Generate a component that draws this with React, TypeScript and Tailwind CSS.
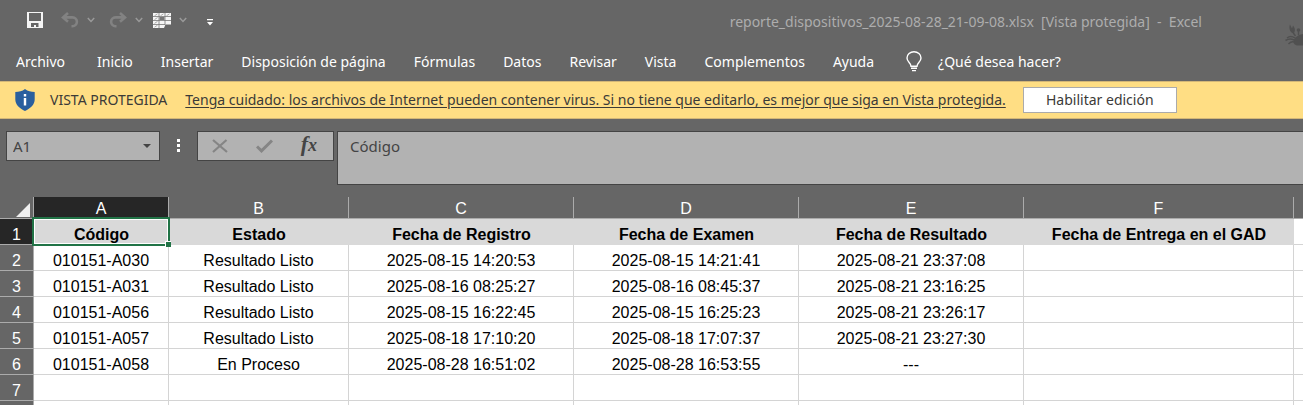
import type { ReactNode } from "react";

const tabs = [
  "Inicio",
  "Insertar",
  "Disposición de página",
  "Fórmulas",
  "Datos",
  "Revisar",
  "Vista",
  "Complementos",
  "Ayuda",
];

const columns = ["A", "B", "C", "D", "E", "F"];

const headings = [
  "Código",
  "Estado",
  "Fecha de Registro",
  "Fecha de Examen",
  "Fecha de Resultado",
  "Fecha de Entrega en el GAD",
];

const rows = [
  ["010151-A030", "Resultado Listo", "2025-08-15 14:20:53", "2025-08-15 14:21:41", "2025-08-21 23:37:08", ""],
  ["010151-A031", "Resultado Listo", "2025-08-16 08:25:27", "2025-08-16 08:45:37", "2025-08-21 23:16:25", ""],
  ["010151-A056", "Resultado Listo", "2025-08-15 16:22:45", "2025-08-15 16:25:23", "2025-08-21 23:26:17", ""],
  ["010151-A057", "Resultado Listo", "2025-08-18 17:10:20", "2025-08-18 17:07:37", "2025-08-21 23:27:30", ""],
  ["010151-A058", "En Proceso", "2025-08-28 16:51:02", "2025-08-28 16:53:55", "---", ""],
  ["", "", "", "", "", ""],
];

function IconButton({ label, className, children }: { label: string; className?: string; children: ReactNode }) {
  return (
    <button type="button" aria-label={label} className={`flex items-center justify-center ${className ?? ""}`}>
      {children}
    </button>
  );
}

function Chevron() {
  return (
    <svg width="8" height="6" viewBox="0 0 8 6" fill="none" stroke="#9a9a9a" strokeWidth="1.5">
      <path d="M.8 1 4 4.4 7.2 1" />
    </svg>
  );
}

function SaveIcon() {
  return (
    <svg width="16" height="16" viewBox="0 0 16 16">
      <path
        fill="#f5f5f5"
        fillRule="evenodd"
        d="M0 0h16v16H0zM2 1v8h12V1zM4 11v4h3v-2h2v2h2.500v-4z"
      />
    </svg>
  );
}

function UndoIcon({ flipped = false }: { flipped?: boolean }) {
  return (
    <svg
      width="18"
      height="16"
      viewBox="0 0 18 16"
      fill="none"
      stroke="#828282"
      strokeWidth="2.6"
      className={flipped ? "-scale-x-100" : ""}
    >
      <path d="M7 1 2 5.400l5 4.400M2 5.400h9.500a4.400 4.400 0 0 1 0 8.800H10.500" />
    </svg>
  );
}

function TableIcon() {
  return (
    <svg width="18" height="15" viewBox="0 0 18 15">
      <path fill="#f5f5f5" d="M0 0h18v11.500h-5.500L11 15H0z" />
      <path stroke="#777" strokeWidth=".8" d="M0 3.500h18M0 7.500h18M0 11.500h12M6 0v15M12 0v12" fill="none" />
      <path stroke="#a0a0a0" strokeWidth=".9" d="m1.500 2.800 3-2M7.500 2.800l3-2M13.500 2.800l3-2M1.500 6.600l3-2M1.500 10.400l3-2M1.500 14.200l3-2" />
      <path fill="#777" d="M6.500 4h5v3h-5z" />
    </svg>
  );
}

function ShieldIcon() {
  return (
    <svg width="20" height="22" viewBox="0 0 20 22">
      <path fill="#2a5f9e" d="M10 0c2.800 2.200 6 3 9.700 3v7.500c0 5-4.200 9-9.700 11.500C4.500 19.500.300 15.500.300 10.500V3C4 3 7.200 2.200 10 0z" />
      <path fill="#fff" d="M8.800 5h2.400v2.400H8.800zM8.800 9h2.400v7.500H8.800z" />
    </svg>
  );
}

function BulbIcon() {
  return (
    <svg width="16" height="21" viewBox="0 0 16 21" fill="none" stroke="#fff" strokeWidth="1.4">
      <path d="M5 15.200C5 11.800 1 11 1 7a7 6.300 0 0 1 14 0c0 4-4 4.800-4 8.200zM5 17.300h6M6 19.600h4" />
    </svg>
  );
}

function CrabIcon() {
  return (
    <svg width="18" height="22" viewBox="0 0 18 22">
      <g fill="#505050">
        <path d="M5 .500 7 4.500 8 1.500c2 2 2.500 5 1.300 7L8.500 9.500C5 8.500 3.500 4 5 .500z" />
        <circle cx="13.500" cy="6" r="1.800" />
        <path d="M8.500 18c0-4 3.500-7 9.500-8v11.500h-6c-2-.500-3.500-1.500-3.500-3.500z" />
      </g>
      <path
        fill="none"
        stroke="#505050"
        strokeWidth="1.500"
        d="M8.300 9 10.500 12M13.500 7v4M10 14c-3-2-5.500-2-8 0M9 16c-3-1.500-6-1-8.500.500M9 18c-2-.500-4 .500-5.500 2"
      />
    </svg>
  );
}

function TitleBar() {
  return (
    <header className="relative flex h-10 items-center pl-[27px] pr-[101px]">
      <div className="flex items-center">
        <IconButton label="Guardar" className="w-4"><SaveIcon /></IconButton>
        <IconButton label="Deshacer" className="ml-[18px]"><UndoIcon /></IconButton>
        <IconButton label="Opciones de deshacer" className="ml-2"><Chevron /></IconButton>
        <IconButton label="Rehacer" className="ml-3.5"><UndoIcon flipped /></IconButton>
        <IconButton label="Opciones de rehacer" className="ml-2"><Chevron /></IconButton>
        <IconButton label="Tabla" className="ml-2.5"><TableIcon /></IconButton>
        <IconButton label="Opciones de tabla" className="ml-2"><Chevron /></IconButton>
        <IconButton label="Personalizar barra" className="ml-5 pt-1">
          <svg width="6" height="7" viewBox="0 0 6 7" fill="#fff"><path d="M0 0h6v1.200H0zM0 3h6L3 6.500z" /></svg>
        </IconButton>
      </div>
      <h1 className="ml-auto whitespace-pre pt-1 text-sm text-[#adadad]">
        reporte_dispositivos_2025-08-28_21-09-08.xlsx  [Vista protegida]  -  Excel
      </h1>
      <div className="absolute right-0 top-6"><CrabIcon /></div>
    </header>
  );
}

function Ribbon() {
  return (
    <nav className="flex h-[41px] items-center gap-8 whitespace-nowrap px-4 pt-0.5 text-sm text-white">
      <button type="button">Archivo</button>
      <div className="flex items-center gap-7">
        {tabs.map((tab) => (
          <button type="button" key={tab}>{tab}</button>
        ))}
      </div>
      <button type="button" className="flex items-center gap-4">
        <BulbIcon />
        ¿Qué desea hacer?
      </button>
    </nav>
  );
}

function ProtectedBar() {
  return (
    <div className="flex h-[38px] items-center whitespace-nowrap border-y border-[#d3b778] bg-[#ffde84] pl-[15px] text-sm text-[#3b3a38]">
      <ShieldIcon />
      <span className="ml-[15px]">VISTA PROTEGIDA</span>
      <a href="#proteccion" className="ml-[18px] underline underline-offset-2">
        Tenga cuidado: los archivos de Internet pueden contener virus. Si no tiene que editarlo, es mejor que siga en Vista protegida.
      </a>
      <button type="button" className="ml-[17px] h-[26px] w-[154px] border border-[#ababab] bg-white">
        Habilitar edición
      </button>
    </div>
  );
}

function FormulaBar() {
  return (
    <div className="flex items-start pb-3 pl-1.5 pt-3 text-[#444]">
      <div className="flex h-[30px] w-[154px] items-center border border-[#444] bg-[#b2b2b2] pr-2">
        <input
          aria-label="Cuadro de nombres"
          defaultValue="A1"
          className="min-w-0 flex-1 bg-transparent pl-1.5 text-[15px] outline-none"
        />
        <svg width="8" height="4" viewBox="0 0 8 4" fill="#444"><path d="M0 0h8L4 4z" /></svg>
      </div>
      <svg width="3" height="14" viewBox="0 0 3 14" fill="#fff" className="ml-[17px] mt-2">
        <path d="M0 0h3v3H0zM0 5h3v3H0zM0 10h3v3H0z" />
      </svg>
      <div className="ml-[17px] flex h-[30px] w-[137px] items-center justify-between border border-[#444] bg-[#b2b2b2] pl-3.5 pr-4">
        <IconButton label="Cancelar">
          <svg width="16" height="14" viewBox="0 0 16 14" fill="none" stroke="#858585" strokeWidth="2.200">
            <path d="m1 1 14 12M14.500 1 1 13" />
          </svg>
        </IconButton>
        <IconButton label="Introducir">
          <svg width="17" height="14" viewBox="0 0 17 14" fill="none" stroke="#858585" strokeWidth="3">
            <path d="m1 7.500 4.500 4.300L16 1.500" />
          </svg>
        </IconButton>
        <button type="button" aria-label="Insertar función" className="pb-0.5 font-['Liberation_Serif',serif] text-[22px] font-bold italic leading-6">
          f<span className="text-lg">x</span>
        </button>
      </div>
      <textarea
        aria-label="Barra de fórmulas"
        defaultValue="Código"
        rows={1}
        className="ml-[3px] h-[54px] min-w-0 flex-1 resize-none border border-r-0 border-[#444] bg-[#b2b2b2] px-3 pt-1 text-[15px] leading-5 outline-none"
      />
    </div>
  );
}

function Sheet() {
  return (
    <table className="w-full table-fixed border-separate border-spacing-0 whitespace-nowrap bg-white text-center font-['Liberation_Sans',Arial,sans-serif] text-base leading-[18px] text-black">
      <colgroup>
        <col className="w-[34px]" />
        <col className="w-[135px]" />
        <col className="w-[180px]" />
        <col className="w-[225px]" />
        <col className="w-[225px]" />
        <col className="w-[225px]" />
        <col className="w-[270px]" />
        <col />
      </colgroup>
      <thead>
        <tr className="h-[22px] bg-[#666] text-white">
          <th aria-label="Seleccionar todo" className="border-b border-r border-[#ababab] p-0">
            <svg width="14" height="14" viewBox="0 0 14 14" fill="#f0f0f0" className="ml-auto mr-[3px] mt-1">
              <path d="M14 0v14H0z" />
            </svg>
          </th>
          {columns.map((c) => (
            <th
              key={c}
              scope="col"
              className={`border-b border-r border-[#ababab] p-0 align-bottom font-normal ${c === "A" ? "bg-[#262626]" : ""}`}
            >
              {c}
            </th>
          ))}
          <th className="border-b border-[#ababab] p-0" />
        </tr>
      </thead>
      <tbody>
        <tr className="h-[26px] font-bold">
          <th scope="row" className="border-b border-r border-[#ababab] bg-[#262626] p-0 align-bottom font-normal text-white">1</th>
          {headings.map((h, i) => (
            <td key={h} className="relative border-b border-[#d9d9d9] bg-[#d9d9d9] p-0 align-bottom">
              {h}
              {i === 0 && (
                <span className="pointer-events-none absolute -bottom-0.5 -left-0.5 -right-px -top-0.5 z-10 border-2 border-[#217346]">
                  <span className="absolute inset-0 border border-white" />
                  <span className="absolute -bottom-[3px] -right-[3px] size-1.5 border-l border-t border-white bg-[#217346]" />
                </span>
              )}
            </td>
          ))}
          <td className="border-b border-[#d4d4d4]" />
        </tr>
        {rows.map((row, r) => (
          <tr key={r} className="h-[26px]">
            <th scope="row" className="border-b border-r border-[#ababab] bg-[#666] p-0 align-bottom font-normal text-white">{r + 2}</th>
            {row.map((cell, c) => (
              <td key={c} className="border-b border-r border-[#d4d4d4] p-0 align-bottom">{cell}</td>
            ))}
            <td className="border-b border-[#d4d4d4]" />
          </tr>
        ))}
        <tr className="h-[26px]">
          <th className="border-r border-[#ababab] bg-[#666] p-0" />
          {columns.map((c) => (
            <td key={c} className="border-r border-[#d4d4d4] p-0" />
          ))}
          <td className="p-0" />
        </tr>
      </tbody>
    </table>
  );
}

export default function App() {
  return (
    <div className="h-screen overflow-hidden bg-[#666] font-['Noto_Sans','Open_Sans',sans-serif]">
      <TitleBar />
      <Ribbon />
      <ProtectedBar />
      <FormulaBar />
      <Sheet />
    </div>
  );
}
